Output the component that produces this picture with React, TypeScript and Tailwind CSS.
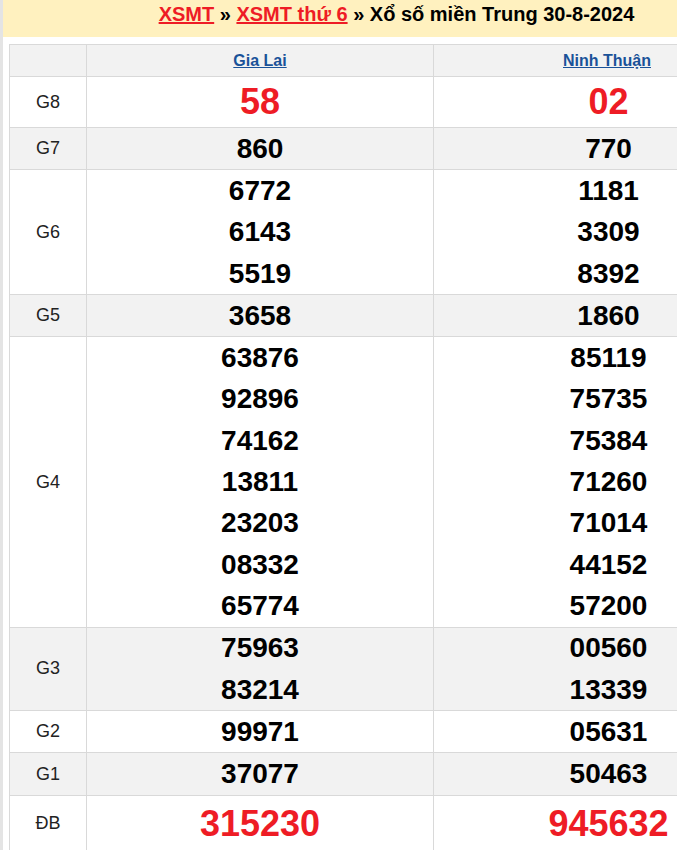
import React from "react";

type Row = { label: string; a: string[]; b: string[]; big?: boolean; alt?: boolean; tall?: boolean };

const rows: Row[] = [
  { label: "G8", a: ["58"], b: ["02"], big: true },
  { label: "G7", a: ["860"], b: ["770"], alt: true },
  { label: "G6", a: ["6772", "6143", "5519"], b: ["1181", "3309", "8392"] },
  { label: "G5", a: ["3658"], b: ["1860"], alt: true },
  {
    label: "G4",
    a: ["63876", "92896", "74162", "13811", "23203", "08332", "65774"],
    b: ["85119", "75735", "75384", "71260", "71014", "44152", "57200"],
  },
  { label: "G3", a: ["75963", "83214"], b: ["00560", "13339"], alt: true },
  { label: "G2", a: ["99971"], b: ["05631"] },
  { label: "G1", a: ["37077"], b: ["50463"], alt: true },
  { label: "ĐB", a: ["315230"], b: ["945632"], big: true, tall: true },
];

function Cell({ nums, big, tall }: { nums: string[]; big?: boolean; tall?: boolean }) {
  return (
    <td className="border border-[#d9d9d9] p-0 text-center align-middle">
      {nums.map((n) =>
        big ? (
          <div
            key={n}
            className={
              tall
                ? "h-[56px] flex items-center justify-center text-[36px] font-bold text-[#ee1c25] leading-none"
                : "h-[50px] flex items-center justify-center text-[36px] font-bold text-[#ee1c25] leading-none"
            }
          >
            {n}
          </div>
        ) : (
          <div key={n} className="h-[41.3px] flex items-center justify-center text-[28px] font-bold text-black leading-none">
            {n}
          </div>
        )
      )}
    </td>
  );
}

export default function App() {
  return (
    <div
      className="w-[677px] h-[850px] overflow-hidden bg-white"
      style={{ fontFamily: '"Liberation Sans", Arial, sans-serif' }}
    >
      <div className="flex w-[790px] min-h-[850px]">
        <div className="w-[3px] bg-[#e4e4e4] shrink-0" />
        <div className="w-[787px] shrink-0">
          <div className="h-[37px] bg-[#fff1bf] pt-[1px] text-center text-[20px] font-bold leading-[26px] text-black">
            <a className="text-[#ee1c25] underline">XSMT</a> » <a className="text-[#ee1c25] underline">XSMT thứ 6</a> » Xổ số miền Trung 30-8-2024
          </div>
          <div className="pt-[7px] pl-[6px]">
            <table className="table-fixed border-collapse w-[774px]">
              <colgroup>
                <col className="w-[77px]" />
                <col className="w-[347px]" />
                <col className="w-[350px]" />
              </colgroup>
              <thead>
                <tr className="bg-[#f2f2f2] h-[32px]">
                  <th className="border border-[#d9d9d9] p-0"></th>
                  <th className="border border-[#d9d9d9] p-0 text-center text-[16px] font-bold">
                    <a className="text-[#1a5299] underline">Gia Lai</a>
                  </th>
                  <th className="border border-[#d9d9d9] p-0 pr-[3px] text-center text-[16px] font-bold">
                    <a className="text-[#1a5299] underline">Ninh Thuận</a>
                  </th>
                </tr>
              </thead>
              <tbody>
                {rows.map((r) => (
                  <tr key={r.label} className={r.alt ? "bg-[#f2f2f2]" : "bg-white"}>
                    <td className="border border-[#d9d9d9] p-0 text-center align-middle text-[18px] text-[#222]">
                      {r.label}
                    </td>
                    <Cell nums={r.a} big={r.big} tall={r.tall} />
                    <Cell nums={r.b} big={r.big} tall={r.tall} />
                  </tr>
                ))}
              </tbody>
            </table>
          </div>
        </div>
      </div>
    </div>
  );
}
